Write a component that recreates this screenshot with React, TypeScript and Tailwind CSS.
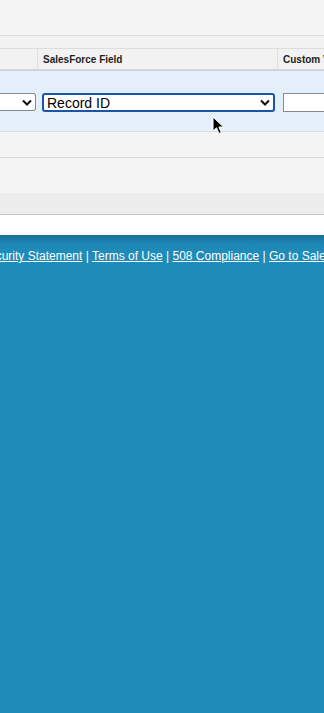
import React from "react";

function Chevron() {
  return (
    <svg width="10" height="7" viewBox="0 0 10 7" className="shrink-0">
      <path d="M1 1.5 L5 5.5 L9 1.5" fill="none" stroke="#111" strokeWidth="2" />
    </svg>
  );
}

function Cursor() {
  return (
    <svg width="13" height="19" viewBox="0 0 13 19" className="absolute left-[212px] top-[116px]">
      <path
        d="M1 1 L1 15 L4.5 11.8 L7 17.5 L9.3 16.5 L6.9 11 L11.5 11 Z"
        fill="#000"
        stroke="#fff"
        strokeWidth="1"
        strokeLinejoin="round"
      />
    </svg>
  );
}

export default function App() {
  const links = ["Security Statement", "Terms of Use", "508 Compliance", "Go to Salesforce"];

  return (
    <div
      className="relative w-[324px] h-[713px] overflow-hidden bg-[#1e8bb8]"
      style={{ fontFamily: '"Liberation Sans", Arial, sans-serif' }}
    >
      <div className="bg-[#f4f4f4]">
        <div className="h-[36px] border-b border-[#dedede]" />
        <div className="h-[13px] bg-[#f2f2f2] border-b border-[#dcdcdc]" />

        {/* header */}
        <div className="flex h-[22px] bg-[#f2f2f2] border-b-2 border-[#d4d4d4] text-[10px] font-bold text-[#222] overflow-hidden">
          <div className="w-[38px] shrink-0 border-r border-[#dedede]" />
          <div className="w-[240px] shrink-0 border-r border-[#dedede] flex items-center pl-[5px]">SalesForce Field</div>
          <div className="flex-1 min-w-0 flex items-center pl-[5px] whitespace-nowrap">Custom Value</div>
        </div>

        {/* selected row */}
        <div className="flex items-start h-[61px] bg-[#e3f0fb] border-b border-[#d9dde0] pt-[22px]">
          <div className="w-[36px] shrink-0 h-[18px] bg-white border border-[#8a8a8a] border-l-0 rounded-r-[3px] flex items-center justify-end pr-[3px]">
            <Chevron />
          </div>
          <div className="ml-[6px] w-[233px] shrink-0 h-[19px] bg-white border-2 border-[#1a55a8] rounded-[3px] flex items-center justify-between pl-[3px] pr-[3px] text-[14px] text-black leading-none">
            <span>Record ID</span>
            <Chevron />
          </div>
          <div className="ml-[8px] flex-1 h-[19px] bg-white border border-[#8a8a8a] border-r-0" />
        </div>

        <div className="h-[26px] bg-[#f4f4f4] border-b border-[#d8d8d8]" />
        <div className="h-[35px] bg-[#f4f4f4]" />
        <div className="h-[22px] bg-[#ececec] border-b border-[#c9c9c9]" />
        <div className="h-[20px] bg-white" />
      </div>

      {/* footer */}
      <div className="bg-gradient-to-b from-[#1b6f95] via-[#1d86b3] to-[#1e8bb8] h-[16px]" />
      <div className="-mt-[1px] ml-[-19px] whitespace-nowrap text-[12px] text-white leading-none">
        {links.map((l, i) => (
          <React.Fragment key={l}>
            {i > 0 && <span> | </span>}
            <span className="underline">{l}</span>
          </React.Fragment>
        ))}
      </div>

      <Cursor />
    </div>
  );
}
